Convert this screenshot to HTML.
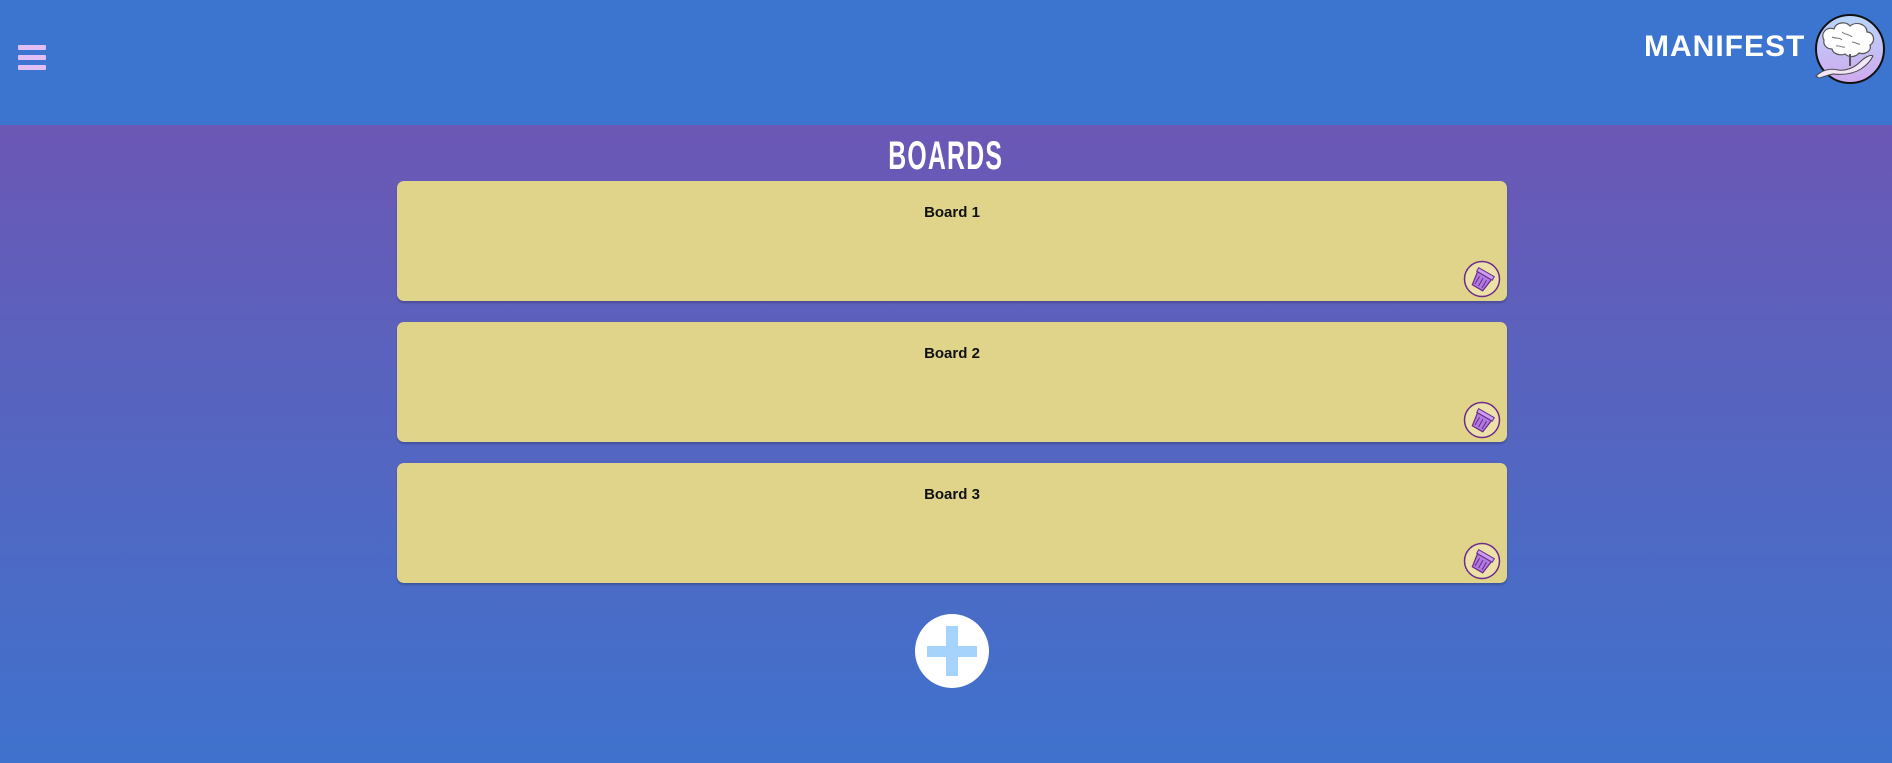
<!DOCTYPE html>
<html><head><meta charset="utf-8"><style>
*{margin:0;padding:0;box-sizing:border-box}
html,body{width:1892px;height:763px;overflow:hidden}
body{font-family:"Liberation Sans",sans-serif;background:linear-gradient(#6c57b5 125px,#5a62bd 350px,#3f72cd 763px)}
.hdr{position:absolute;left:0;top:0;width:1892px;height:125px;background:#3c75cf}
.ham{position:absolute;left:18px;width:28px;height:5px;background:#e0bff7;border-radius:1px}
.brand{position:absolute;left:1644px;top:30px;font-size:30px;font-weight:bold;color:#fff;letter-spacing:1px}
.title{position:absolute;left:0;width:1892px;top:134px;text-align:center;color:#fff;font-size:40px;font-weight:bold;letter-spacing:2px}
.title span{display:inline-block;transform:scaleX(0.62)}
.card{position:absolute;left:397px;width:1110px;height:120px;background:#dfd48a;border-radius:7px;box-shadow:0 2px 2px rgba(0,0,0,.2)}
.card b{position:absolute;left:0;width:100%;top:23px;text-align:center;font-size:15px;color:#111}
.card svg{position:absolute;right:6px;bottom:3px}
.plus{position:absolute;left:915px;top:614px;width:74px;height:74px;border-radius:50%;background:#fff}
.plus i{position:absolute;background:#a6d3fb}
</style></head><body>
<div class="hdr">
<div class="ham" style="top:45px"></div><div class="ham" style="top:55px"></div><div class="ham" style="top:65px"></div>
<div class="brand">MANIFEST</div>
<svg style="position:absolute;left:1812px;top:12px" width="76" height="76" viewBox="0 0 76 76">
<defs><linearGradient id="g" x1="0" y1="0" x2="0" y2="1"><stop offset="0" stop-color="#b9d7fb"/><stop offset="1" stop-color="#cfa9ee"/></linearGradient></defs>
<circle cx="38" cy="37" r="34" fill="url(#g)" stroke="#111" stroke-width="2"/>
<path d="M12 28c-4-7 3-14 10-11 2-7 12-8 16-3 6-5 17-2 17 6 7 0 9 10 3 13 2 6-5 10-11 8-3 4-10 5-14 1-5 2-12 0-13-5-6 0-9-5-8-9z" fill="#fff" stroke="#555" stroke-width="1.2"/>
<path d="M20 25c4 2 8 0 10 3M30 20c3 3 8 2 10 5M40 30c4 0 6 3 8 2M24 34c4-1 6 2 9 1" fill="none" stroke="#777" stroke-width="1"/>
<path d="M38 42v12" stroke="#555" stroke-width="2"/>
<path d="M4 64c6-6 14-8 22-6 8 1 16-2 22-8 4-4 10-8 13-6-2 4-6 9-12 13-8 5-18 6-28 5-5 1-10 3-14 4z" fill="#f1e5f7" stroke="#444" stroke-width="1"/>
</svg>
</div>
<div class="title"><span>BOARDS</span></div>
<div class="card" style="top:181px"><b>Board 1</b><svg width="38" height="38" viewBox="0 0 38 38"><circle cx="19" cy="19" r="17.5" fill="#ece2a8" stroke="#6c2a8a" stroke-width="1.5"/><g transform="rotate(30 19 20)"><path d="M11 15h16l-2 14h-12z" fill="#b07be0" stroke="#6c2a8a" stroke-width="1.2"/><rect x="10" y="11" width="18" height="4" fill="#c9a0f0" stroke="#6c2a8a"/><path d="M15 18v9M19 18v9M23 18v9" stroke="#6c2a8a"/></g></svg></div>
<div class="card" style="top:322px"><b>Board 2</b><svg width="38" height="38" viewBox="0 0 38 38"><circle cx="19" cy="19" r="17.5" fill="#ece2a8" stroke="#6c2a8a" stroke-width="1.5"/><g transform="rotate(30 19 20)"><path d="M11 15h16l-2 14h-12z" fill="#b07be0" stroke="#6c2a8a" stroke-width="1.2"/><rect x="10" y="11" width="18" height="4" fill="#c9a0f0" stroke="#6c2a8a"/><path d="M15 18v9M19 18v9M23 18v9" stroke="#6c2a8a"/></g></svg></div>
<div class="card" style="top:463px"><b>Board 3</b><svg width="38" height="38" viewBox="0 0 38 38"><circle cx="19" cy="19" r="17.5" fill="#ece2a8" stroke="#6c2a8a" stroke-width="1.5"/><g transform="rotate(30 19 20)"><path d="M11 15h16l-2 14h-12z" fill="#b07be0" stroke="#6c2a8a" stroke-width="1.2"/><rect x="10" y="11" width="18" height="4" fill="#c9a0f0" stroke="#6c2a8a"/><path d="M15 18v9M19 18v9M23 18v9" stroke="#6c2a8a"/></g></svg></div>
<div class="plus"><i style="left:31px;top:12px;width:12px;height:50px"></i><i style="left:12px;top:32px;width:50px;height:11px"></i></div>
</body></html>
